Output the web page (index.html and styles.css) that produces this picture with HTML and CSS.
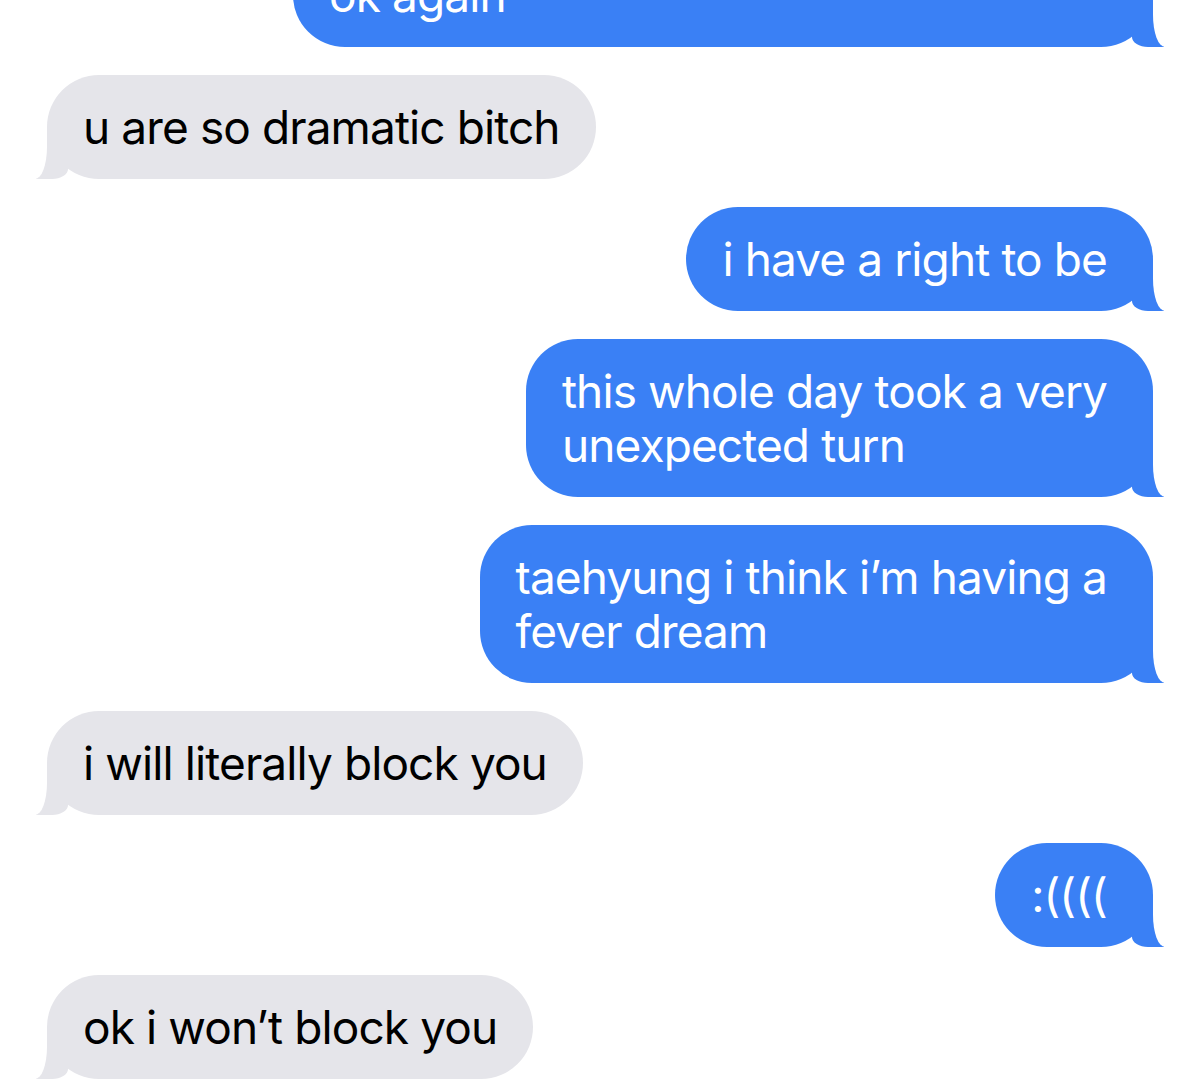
FILE: index.html
```html
<!DOCTYPE html>
<html lang="en">
<head>
<meta charset="utf-8">
<title>Messages</title>
<link rel="stylesheet" href="styles.css">
</head>
<body>
<div class="chat">
  <div class="msg out clipped">ok again</div>
  <div class="msg in">u are so dramatic bitch</div>
  <div class="msg out">i have a right to be</div>
  <div class="msg out">this whole day took a very<br>unexpected turn</div>
  <div class="msg out">taehyung i think i’m having a<br>fever dream</div>
  <div class="msg in">i will literally block you</div>
  <div class="msg out">:((((</div>
  <div class="msg in">ok i won’t block you</div>
</div>
</body>
</html>
```

FILE: styles.css
```css
:root {
  --blue: #3a80f5;
  --gray: #e5e5ea;
}

html, body {
  margin: 0;
  background: #ffffff;
  overflow: hidden;
}

.chat {
  display: flex;
  flex-direction: column;
  gap: 28px;
  padding: 0 47px;
  font-family: "Inter", "Roboto", "Liberation Sans", sans-serif;
  font-size: 46px;
  line-height: 54px;
  letter-spacing: -0.9px;
}

.msg {
  position: relative;
  box-sizing: border-box;
  padding: 25px 36px;
  border-radius: 52px;
  white-space: nowrap;
}

.msg.out {
  align-self: flex-end;
  background: var(--blue);
  color: #ffffff;
  padding-right: 46px;
}

.msg.in {
  align-self: flex-start;
  background: var(--gray);
  color: #000000;
}

.msg.clipped {
  width: 860px;
  margin-top: -57px;
}

/* tails */
.msg.out::before,
.msg.out::after,
.msg.in::before,
.msg.in::after {
  content: "";
  position: absolute;
  bottom: 0;
  height: 52px;
}

.msg.out::before {
  right: -11px;
  width: 32px;
  background: var(--blue);
  border-bottom-left-radius: 16px 10px;
}

.msg.out::after {
  left: 100%;
  width: 24px;
  background: #ffffff;
  border-bottom-left-radius: 12px 32px;
}

.msg.in::before {
  left: -11px;
  width: 32px;
  background: var(--gray);
  border-bottom-right-radius: 16px 10px;
}

.msg.in::after {
  right: 100%;
  width: 24px;
  background: #ffffff;
  border-bottom-right-radius: 12px 32px;
}
```
